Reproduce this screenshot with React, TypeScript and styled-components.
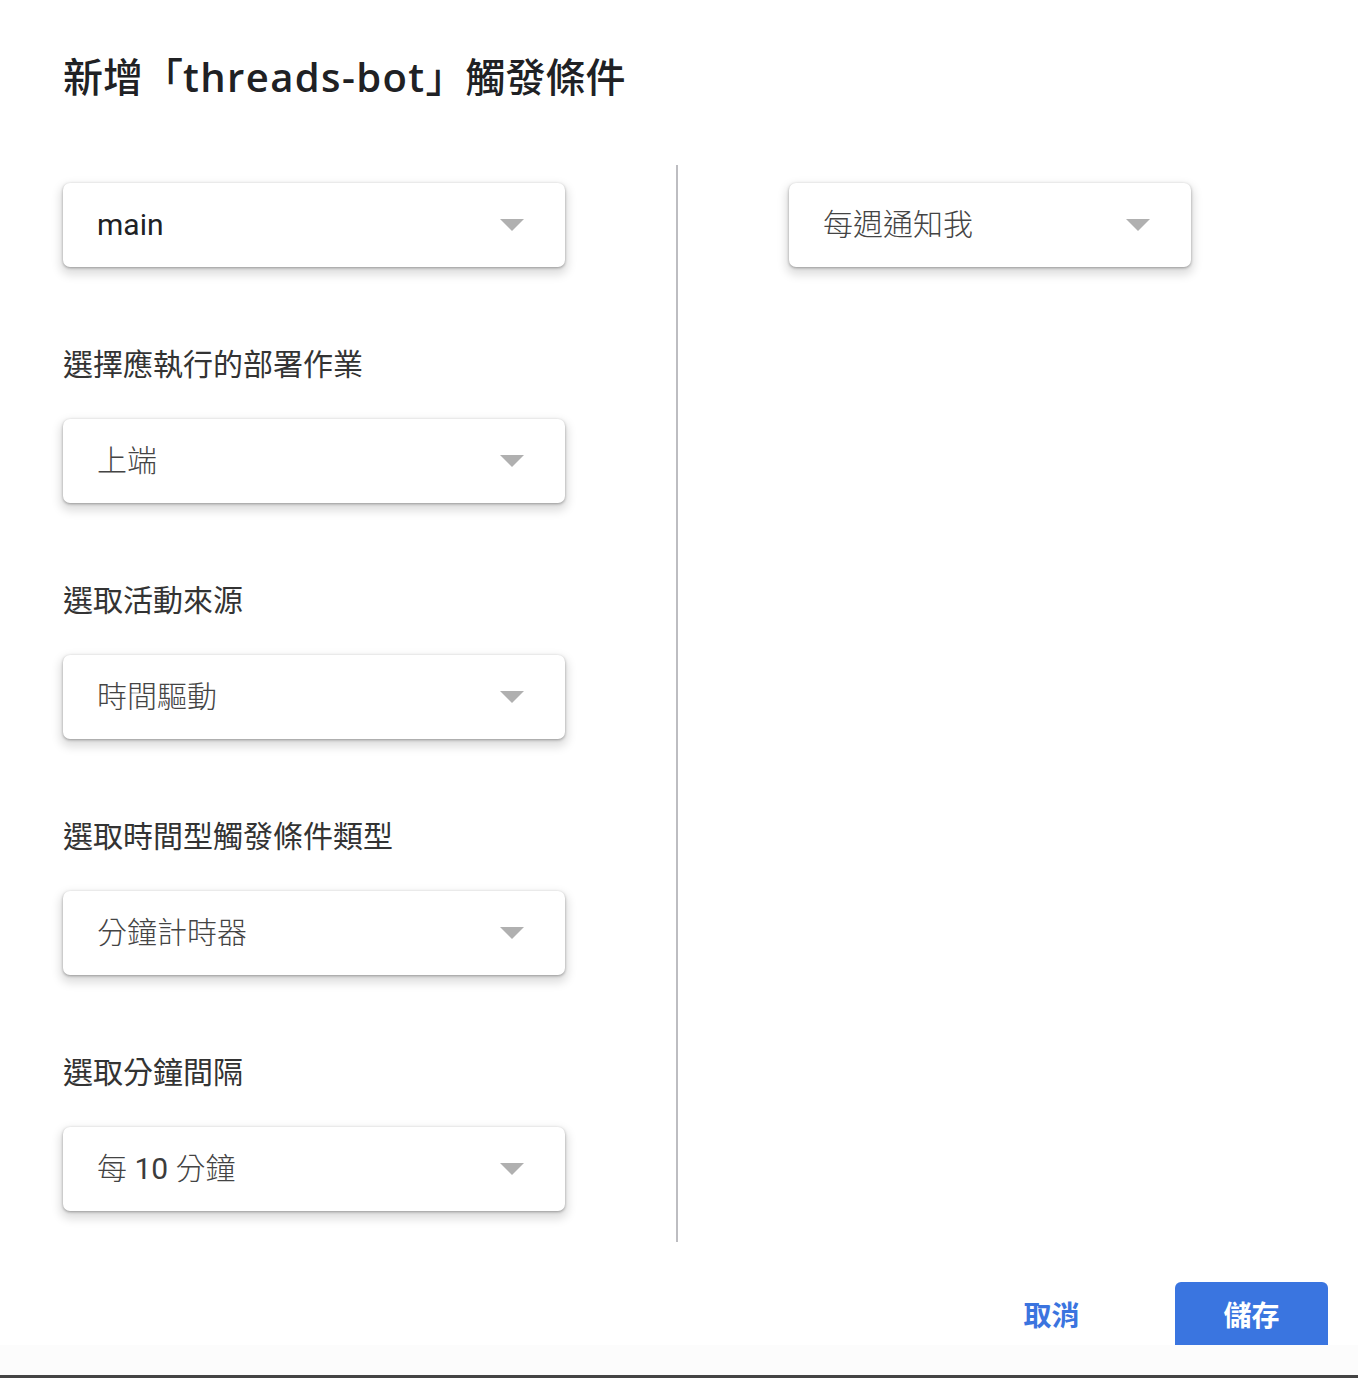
import React from 'react';
import styled, { createGlobalStyle } from 'styled-components';

const GlobalStyle = createGlobalStyle`
  html, body {
    margin: 0;
    padding: 0;
    background: #ffffff;
  }
  body {
    font-family: Roboto, "Noto Sans CJK TC", "Noto Sans", sans-serif;
    color: #202124;
  }
`;

const Page = styled.div`
  width: 1358px;
  height: 1378px;
  display: flex;
  flex-direction: column;
  overflow: hidden;
`;

const Dialog = styled.div`
  height: 1345px;
  flex: none;
  display: flex;
  flex-direction: column;
  overflow: hidden;
  background: #ffffff;
  & > * {
    flex: none;
  }
`;

const Title = styled.h1`
  margin: 0;
  padding: 50px 0 0 63px;
  height: 165px;
  box-sizing: border-box;
  font-size: 40px;
  line-height: 54px;
  font-weight: 500;
  color: #202124;
  font-family: "Open Sans", "Noto Sans CJK TC", sans-serif;
  white-space: nowrap;
`;

const TitleLatin = styled.span`
  letter-spacing: 1.4px;
  font-weight: 600;
`;

const Body = styled.div`
  display: flex;
  padding-left: 63px;
`;

const Column = styled.div<{ $side: 'left' | 'right' }>`
  display: flex;
  flex-direction: column;
  padding: 18px 0 31px;
  width: 502px;
  ${({ $side }) => ($side === 'left' ? 'padding-right: 111px;' : 'padding-left: 111px; width: 402px;')}
`;

const Divider = styled.div`
  width: 2px;
  background: #bdbdc1;
  flex: none;
`;

const Field = styled.div`
  display: flex;
  flex-direction: column;
  & + & {
    margin-top: 75px;
  }
`;

const Label = styled.div`
  font-size: 30px;
  line-height: 40px;
  height: 40px;
  margin-bottom: 37px;
  color: #333333;
  font-family: "Noto Sans CJK TC", sans-serif;
  font-weight: 400;
`;

const SelectBox = styled.div`
  height: 84px;
  box-sizing: border-box;
  border-radius: 7px;
  background: #ffffff;
  box-shadow: 0 1px 3px rgba(0, 0, 0, 0.34), 0 5px 10px 3px rgba(0, 0, 0, 0.13);
  display: flex;
  align-items: center;
  padding: 0 41px 0 34px;
`;

const SelectText = styled.span<{ $strong?: boolean }>`
  flex: 1;
  font-size: 30px;
  line-height: 40px;
  color: ${({ $strong }) => ($strong ? '#202124' : '#3c3c3c')};
  font-family: Roboto, "Noto Sans CJK TC", sans-serif;
  font-weight: 400;
  white-space: nowrap;
`;

const Light = styled.span`
  font-weight: 300;
  color: #444444;
`;

const Arrow = styled.span`
  width: 0;
  height: 0;
  border-left: 12px solid transparent;
  border-right: 12px solid transparent;
  border-top: 12px solid #b0b0b0;
  flex: none;
`;

const Actions = styled.div`
  display: flex;
  justify-content: flex-end;
  align-items: flex-start;
  gap: 47px;
  padding: 40px 30px 0 0;
`;

const ActionButton = styled.button<{ $primary?: boolean }>`
  width: 153px;
  height: 70px;
  border: none;
  border-radius: 6px;
  padding: 0 0 6px;
  font-family: "Noto Sans CJK TC", sans-serif;
  font-size: 28px;
  font-weight: 700;
  cursor: pointer;
  background: ${({ $primary }) => ($primary ? '#3a75e0' : 'transparent')};
  color: ${({ $primary }) => ($primary ? '#ffffff' : '#3b74df')};
`;

const BottomStrip = styled.div`
  height: 30px;
  flex: none;
  background: #fcfcfc;
`;

const BottomBar = styled.div`
  height: 3px;
  flex: none;
  background: #444444;
`;

type Select = { label?: string; value: React.ReactNode; strong?: boolean };

const leftFields: Select[] = [
  { value: 'main', strong: true },
  { label: '選擇應執行的部署作業', value: <Light>上端</Light> },
  { label: '選取活動來源', value: <Light>時間驅動</Light> },
  { label: '選取時間型觸發條件類型', value: <Light>分鐘計時器</Light> },
  {
    label: '選取分鐘間隔',
    value: (
      <>
        <Light>每</Light> 10 <Light>分鐘</Light>
      </>
    ),
  },
];

function Dropdown({ label, value, strong }: Select) {
  return (
    <Field>
      {label && <Label>{label}</Label>}
      <SelectBox>
        <SelectText $strong={strong}>{value}</SelectText>
        <Arrow />
      </SelectBox>
    </Field>
  );
}

export default function App() {
  return (
    <Page>
      <GlobalStyle />
      <Dialog>
        <Title>
          新增「<TitleLatin>threads-bot</TitleLatin>」觸發條件
        </Title>
        <Body>
          <Column $side="left">
            {leftFields.map((f, i) => (
              <Dropdown key={i} {...f} />
            ))}
          </Column>
          <Divider />
          <Column $side="right">
            <Dropdown value={<Light>每週通知我</Light>} />
          </Column>
        </Body>
        <Actions>
          <ActionButton>取消</ActionButton>
          <ActionButton $primary>儲存</ActionButton>
        </Actions>
      </Dialog>
      <BottomStrip />
      <BottomBar />
    </Page>
  );
}
